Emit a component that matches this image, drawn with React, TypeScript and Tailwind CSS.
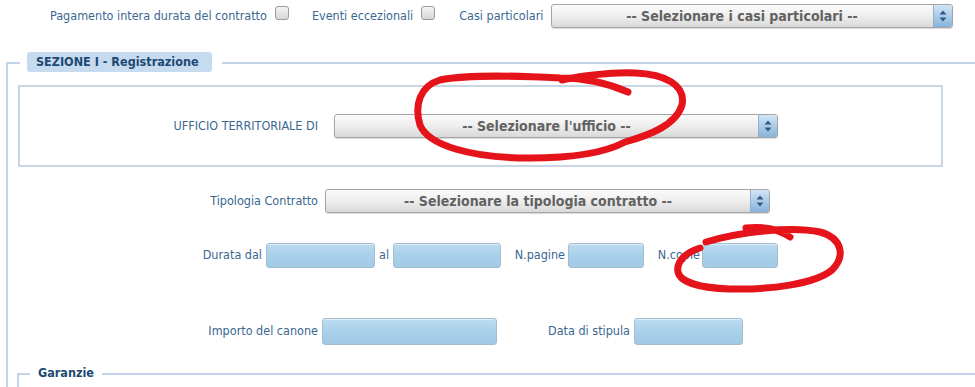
import React from "react";

// Contract registration form (section I) with hand-drawn red marks on top.

const font = { fontFamily: '"DejaVu Sans Condensed", "DejaVu Sans", Verdana, sans-serif' };

function Checkbox() {
  return (
    <span className="inline-block w-[14px] h-[14px] rounded-[3px] border border-[#9a9a9a] bg-gradient-to-b from-[#f4f4f4] to-[#d6d6d6]" />
  );
}

function Select({ text, className = "" }: { text: string; className?: string }) {
  return (
    <div
      className={`flex items-stretch rounded-[3px] border border-[#a5a5a5] bg-gradient-to-b from-[#fbfbfb] via-[#eeeeee] to-[#d9d9d9] shadow-[0_1px_1px_rgba(0,0,0,0.15)] ${className}`}
    >
      <div className="flex-1 flex items-center justify-center text-[14px] font-bold text-[#626262] whitespace-nowrap">
        {text}
      </div>
      <div className="w-[19px] flex items-center justify-center border-l border-[#8fb0cf] rounded-r-[2px] bg-gradient-to-b from-[#d3e5f5] to-[#86b3db]">
        <svg width="8" height="12" viewBox="0 0 8 12">
          <path d="M4 0.5 L7.5 4.5 L0.5 4.5 Z" fill="#2f5b85" />
          <path d="M4 11.5 L7.5 7.5 L0.5 7.5 Z" fill="#2f5b85" />
        </svg>
      </div>
    </div>
  );
}

function Input({ className = "" }: { className?: string }) {
  return (
    <div
      className={`rounded-[3px] border border-[#a3bccf] bg-gradient-to-b from-[#bcdcf0] via-[#a9d0ea] to-[#a3cae5] shadow-[inset_0_1px_0_rgba(255,255,255,0.5)] ${className}`}
    />
  );
}

export default function App() {
  return (
    <div className="relative w-[975px] h-[387px] overflow-hidden bg-white text-[12.5px] text-[#3a6792]" style={font}>
      {/* Top options row */}
      <div className="h-[32px] flex items-center pl-[50px]">
        <span>Pagamento intera durata del contratto</span>
        <span className="ml-[8px]"><Checkbox /></span>
        <span className="ml-[23px]">Eventi eccezionali</span>
        <span className="ml-[8px]"><Checkbox /></span>
        <span className="ml-[24px]">Casi particolari</span>
        <Select text="-- Selezionare i casi particolari --" className="ml-[7px] w-[402px] h-[24px]" />
      </div>

      {/* SEZIONE I */}
      <div className="mt-[20px] ml-[6px]">
        <div className="flex h-[20px]">
          <div className="w-[14px] h-[10px] self-end border-t-2 border-l-2 border-[#c4d4e8]" />
          <div className="ml-[7px] w-[185px] h-[20px] flex items-center px-[9px] rounded-[3px] bg-[#c6daf0] text-[12.5px] font-bold text-[#1d4a72] whitespace-nowrap">
            SEZIONE I - Registrazione
          </div>
          <div className="ml-[10px] flex-1 h-[2px] mt-[10px] bg-[#c4d4e8]" />
        </div>

        <div className="border-l-2 border-[#c4d4e8] pb-[30px]">
          {/* Ufficio box */}
          <div className="ml-[10px] pt-[13px]">
            <div className="w-[925px] h-[82px] border-2 border-[#c9d6e8] flex items-center">
              <div className="w-[298px] text-right whitespace-nowrap">UFFICIO TERRITORIALE DI</div>
              <Select text="-- Selezionare l'ufficio --" className="ml-[16px] w-[444px] h-[24px]" />
            </div>
          </div>

          {/* Tipologia */}
          <div className="mt-[22px] flex items-center">
            <div className="w-[310px] text-right">Tipologia Contratto</div>
            <Select text="-- Selezionare la tipologia contratto --" className="ml-[7px] w-[445px] h-[24px]" />
          </div>

          {/* Durata row */}
          <div className="mt-[30px] flex items-center">
            <div className="w-[254px] text-right">Durata dal</div>
            <Input className="ml-[4px] w-[109px] h-[25px]" />
            <div className="w-[18px] text-center">al</div>
            <Input className="w-[108px] h-[25px]" />
            <div className="w-[67px] text-right pr-[3px]">N.pagine</div>
            <Input className="w-[76px] h-[25px]" />
            <div className="w-[58px] text-right pr-[2px] whitespace-nowrap">N.copie</div>
            <Input className="w-[76px] h-[25px]" />
          </div>

          {/* Importo row */}
          <div className="mt-[50px] flex items-center">
            <div className="w-[310px] text-right">Importo del canone</div>
            <Input className="ml-[4px] w-[175px] h-[27px]" />
            <div className="w-[137px] text-right pr-[4px]">Data di stipula</div>
            <Input className="w-[109px] h-[27px]" />
          </div>

          {/* Garanzie */}
          <div className="mt-[18px] ml-[9px]">
            <div className="flex h-[20px] items-stretch">
              <div className="w-[13px] h-[10px] self-end border-t-2 border-l-2 border-[#c4d4e8]" />
              <div className="px-[8px] flex items-center text-[12.5px] font-bold text-[#1d4a72]">Garanzie</div>
              <div className="flex-1 h-[2px] mt-[10px] bg-[#c4d4e8]" />
            </div>
            <div className="border-l-2 border-[#c4d4e8] h-[30px]" />
          </div>
        </div>
      </div>

      {/* Red hand-drawn marks */}
      <svg className="absolute inset-0 pointer-events-none" width="975" height="387" viewBox="0 0 975 387">
        <path
          d="M628 92 C 605 82, 585 78, 560 78 C 520 76, 470 74, 440 80 C 420 86, 414 105, 420 125 C 428 145, 470 158, 530 158 C 580 158, 610 150, 625 142 C 650 135, 676 125, 682 105 C 686 85, 665 74, 635 73 C 610 72, 580 76, 562 80"
          fill="none"
          stroke="#e5141b"
          strokeWidth="7"
          strokeLinecap="round"
          strokeLinejoin="round"
        />
        <path
          d="M746 228 C 765 226, 780 230, 790 237 M 706 242 C 740 232, 790 226, 820 232 C 842 238, 846 256, 832 270 C 815 284, 770 290, 730 289 C 700 288, 680 282, 678 272 C 676 262, 686 252, 700 248"
          fill="none"
          stroke="#e5141b"
          strokeWidth="7"
          strokeLinecap="round"
          strokeLinejoin="round"
        />
      </svg>
    </div>
  );
}
